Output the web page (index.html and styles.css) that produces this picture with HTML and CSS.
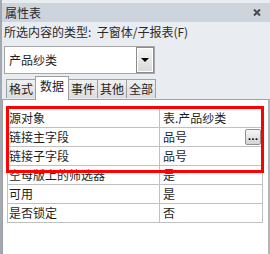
FILE: index.html
```html
<!DOCTYPE html>
<html lang="zh">
<head>
    <meta charset="UTF-8">
    <title>属性表</title>
    <link rel="stylesheet" href="styles.css">
</head>
<body>
    <div class="window">
        <div class="title">
            <span>属性表</span>
            <svg class="close" width="8" height="7" viewBox="0 0 8 7">
                <path d="M1 0.5 L7 6.5 M7 0.5 L1 6.5" stroke="#4a4a4a" stroke-width="2"/>
            </svg>
        </div>
        <div class="type-label">所选内容的类型:&nbsp; 子窗体/子报表(F)</div>

        <div class="combo">
            <div class="combo-field">产品纱类</div>
            <div class="combo-btn"><span class="arrow"></span></div>
        </div>

        <div class="tabs">
            <div class="tab">格式</div>
            <div class="tab active">数据</div>
            <div class="tab">事件</div>
            <div class="tab">其他</div>
            <div class="tab">全部</div>
        </div>

        <div class="panel">
            <div class="grid">
                <div class="row"><div class="name">源对象</div><div class="value">表.产品纱类</div></div>
                <div class="row"><div class="name">链接主字段</div><div class="value">品号<button class="build-btn">...</button></div></div>
                <div class="row"><div class="name">链接子字段</div><div class="value">品号</div></div>
                <div class="row"><div class="name">空母版上的筛选器</div><div class="value">是</div></div>
                <div class="row"><div class="name">可用</div><div class="value">是</div></div>
                <div class="row"><div class="name">是否锁定</div><div class="value">否</div></div>
            </div>
        </div>
    </div>

    <!-- marca roja encima de la tabla -->
    <div class="highlight"></div>
</body>
</html>
```

FILE: styles.css
```css
body {
    margin: 0;
    width: 270px;
    height: 254px;
    overflow: hidden;
    background-color: #e9ecf0;
    font-family: "Noto Sans CJK SC", sans-serif;
    font-size: 12px;
    color: #1e1e1e;
    position: relative;
}

.window {
    height: 254px;
    box-sizing: border-box;
    border-left: 2px solid #a2a9b2;
    padding-top: 3px;
    overflow: hidden;
}

.title {
    height: 19px;
    background-color: #cdd4dc;
    display: flex;
    align-items: center;
    justify-content: space-between;
    padding: 0 9px 0 3px;
    color: #2a2a2a;
    line-height: 19px;
}

.close {
    display: block;
}

.type-label {
    padding: 2px 0 0 2px;
    line-height: 16px;
    color: #2a2a2a;
}

.combo {
    display: flex;
    margin: 6px 0 0 2px;
    width: 151px;
    height: 28px;
    box-sizing: border-box;
    border: 1px solid #a6a6a6;
    background: #fff;
}

.combo-field {
    flex: 1;
    padding-left: 4px;
    line-height: 26px;
}

.combo-btn {
    width: 18px;
    box-sizing: border-box;
    border: 1px solid #8c8c8c;
    box-shadow: inset 0 0 0 1px #fff;
    background: linear-gradient(#f4f4f4, #d9d9d9);
    display: flex;
    align-items: center;
    justify-content: center;
}

.arrow {
    width: 0;
    height: 0;
    border-left: 4px solid transparent;
    border-right: 4px solid transparent;
    border-top: 4px solid #000;
}

.tabs {
    display: flex;
    align-items: flex-end;
    height: 23px;
    margin: 2px 0 0 4px;
    position: relative;
    z-index: 1;
}

.tab {
    height: 19px;
    box-sizing: border-box;
    padding: 0 2px;
    border: 1px solid #a0a0a0;
    border-bottom: none;
    background: linear-gradient(#f0f0f0, #dcdcdc);
    line-height: 18px;
    margin-bottom: 1px;
}

.tab + .tab {
    margin-left: -1px;
}

.tab.active {
    height: 24px;
    background: #fff;
    padding: 0 4px;
    line-height: 17px;
    margin-bottom: -1px;
    position: relative;
}

.panel {
    background: #fff;
    border: 1px solid #a0a0a0;
    border-right: 2px solid #b4b4b4;
    border-bottom: none;
    width: 261px;
    height: 146px;
    padding: 8px 0 0 4px;
    box-sizing: content-box;
}

.grid {
    width: 256px;
    box-sizing: border-box;
    border: 1px solid #c0c0c0;
    border-bottom: none;
}

.row {
    display: grid;
    grid-template-columns: 152px 1fr;
    height: 19px;
    box-sizing: border-box;
    border-bottom: 1px solid #c0c0c0;
    line-height: 18px;
}

.name {
    border-right: 1px solid #c0c0c0;
    padding-left: 1px;
    white-space: nowrap;
    overflow: hidden;
}

.value {
    padding-left: 3px;
    position: relative;
}

.build-btn {
    position: absolute;
    right: 1px;
    top: 1px;
    width: 16px;
    height: 16px;
    padding: 0;
    border: 1px solid #8e8f8f;
    border-radius: 2px;
    background: linear-gradient(#f6f6f6, #d4d4d4);
    font-family: "DejaVu Sans", sans-serif;
    font-size: 9px;
    font-weight: bold;
    line-height: 10px;
    color: #000;
}

.highlight {
    position: absolute;
    left: 6px;
    top: 106px;
    width: 258px;
    height: 67px;
    box-sizing: border-box;
    border: 3px solid #ff0000;
}
```
